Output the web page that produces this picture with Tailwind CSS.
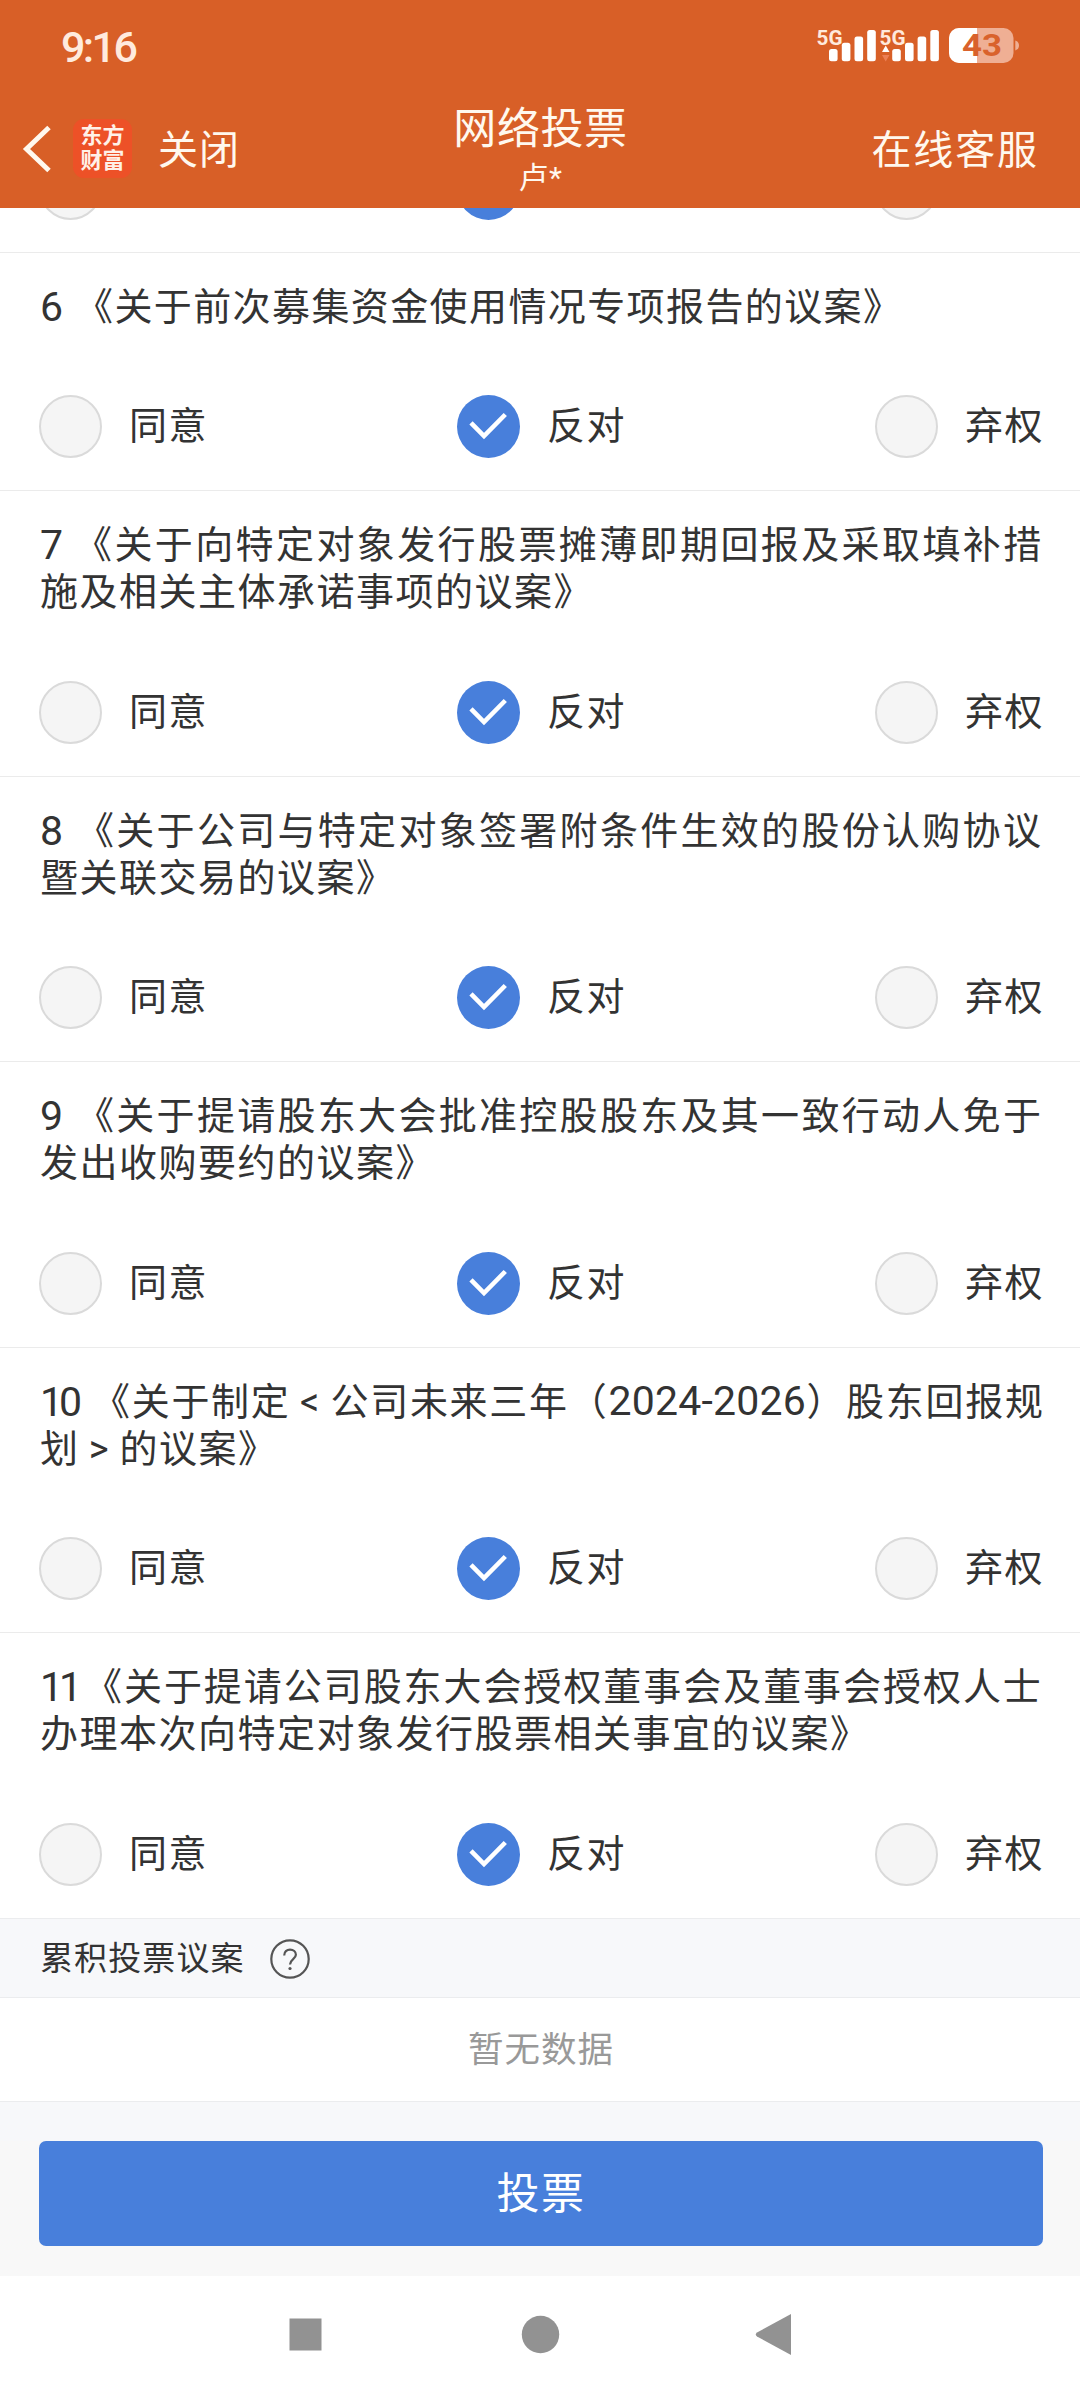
<!DOCTYPE html>
<html lang="zh-CN">
<head>
  <meta charset="UTF-8" />
  <meta name="viewport" content="width=device-width, initial-scale=1.0" />
  <title>网络投票</title>
  <script src="https://cdn.jsdelivr.net/npm/@tailwindcss/browser@4"></script>
  <style>
    body {
      font-family: Roboto, 'Noto Sans CJK SC', sans-serif;
    }
  </style>
</head>
<body class="w-[1080px] h-[2400px] flex flex-col overflow-hidden bg-white text-[#333]">

  <!-- Header -->
  <header class="h-[208px] shrink-0 bg-[#d85f27] text-[#fff8ee]">
    <!-- Status bar -->
    <div class="h-[90px] flex items-center justify-between pl-[61px] pr-[60px]">
      <span class="text-[43px] leading-[50px] font-medium tracking-[-2.6px] text-[#ffeadd] pt-[3px]">9:16</span>
      <svg class="w-[204px] h-[90px]" viewBox="816 0 204 90" fill="#fff">
        <text x="816.5" y="45" font-size="21" font-weight="700" fill="#ffe9dc" textLength="26" lengthAdjust="spacingAndGlyphs">5G</text>
        <rect x="829" y="49" width="8.6" height="12.3" rx="2.5" />
        <rect x="841.8" y="42.7" width="8.6" height="18.6" rx="2.5" />
        <rect x="854.5" y="36.6" width="8.6" height="24.7" rx="2.5" />
        <rect x="867.2" y="30" width="8.6" height="31.3" rx="2.5" />
        <text x="879.5" y="45" font-size="21" font-weight="700" fill="#ffe9dc" textLength="26" lengthAdjust="spacingAndGlyphs">5G</text>
        <path d="M885.7 45.5L889.5 52H882Z" />
        <path d="M885.7 61.5L889.5 55H882Z" fill="#ec7f55" />
        <rect x="892.2" y="49" width="8.6" height="12.3" rx="2.5" />
        <rect x="905" y="42.7" width="8.6" height="18.6" rx="2.5" />
        <rect x="917.6" y="36.6" width="8.6" height="24.7" rx="2.5" />
        <rect x="930.3" y="30" width="8.6" height="31.3" rx="2.5" />
        <!-- Battery -->
        <rect x="949" y="28" width="64.5" height="35" rx="10" fill="#efaf94" />
        <path d="M977 28H959A10 10 0 0 0 949 38V53A10 10 0 0 0 959 63H977Z" />
        <path d="M1015.3 40.5Q1019 42 1019 45.5T1015.3 50.5Z" fill="#efaf94" />
        <text x="962" y="56" font-size="31" font-weight="700" fill="#d9622c" textLength="40" lengthAdjust="spacingAndGlyphs">43</text>
      </svg>
    </div>
    <!-- Title bar -->
    <div class="h-[118px] grid grid-cols-[1fr_auto_1fr] items-start">
      <div class="flex items-center h-[118px] pl-[22px]">
        <svg class="w-[32px] h-[50px]" viewBox="0 0 32 50" fill="none" stroke="#fff8ee" stroke-width="5"><path d="M27 3.5L4.5 25L27 46.5" /></svg>
        <div class="w-[59px] h-[59px] ml-[19px] mb-[2px] rounded-[11px] bg-[#ed5127] flex flex-col items-center justify-center text-[22px] leading-[25px] font-bold text-[#fff1e8]">
          <span>东方</span><span>财富</span>
        </div>
        <span class="ml-[26px] pt-[3px] text-[40px] leading-[50px] tracking-[1px]">关闭</span>
      </div>
      <div class="flex flex-col items-center pt-[13px] pl-[1px]">
        <span class="text-[43px] leading-[52px] tracking-[0.6px]">网络投票</span>
        <span class="text-[30px] leading-[34px] tracking-[0.5px] mt-[6px]">卢*</span>
      </div>
      <div class="flex items-center justify-end h-[118px] pr-[41px]">
        <span class="pt-[3px] text-[40px] leading-[50px] tracking-[1.9px]">在线客服</span>
      </div>
    </div>
  </header>

  <!-- Proposal list, scrolled so that only the foot of item 5 shows -->
  <main class="shrink-0">
    <div class="h-[44px] overflow-hidden flex flex-col justify-end pb-[32px]" id="previous"></div>
    <div id="proposals"></div>
  </main>

  <!-- Cumulative voting -->
  <section class="shrink-0">
    <div class="h-[80px] box-border border-y border-[#ebecee] bg-[#f7f8fa] flex items-center pl-[40px]">
      <h2 class="text-[33px] leading-[48px] tracking-[1.1px] pt-[2px]">累积投票议案</h2>
      <svg class="w-[40px] h-[40px] ml-[25px] mt-[2px]" viewBox="0 0 40 40" fill="none" stroke="#555" stroke-width="2.2">
        <circle cx="20" cy="20" r="18.7" />
        <path d="M14.2 16.5C14.2 12.7 16.8 10.7 20 10.7C23.5 10.7 25.9 12.8 25.9 15.8C25.9 20 20 20.3 20 25.5" />
        <circle cx="20" cy="29.5" r="1.6" fill="#555" stroke="none" />
      </svg>
    </div>
    <p class="h-[103px] text-center text-[35.5px] leading-[103px] tracking-[1px] text-[#999] pl-[2px] pt-[1px]">暂无数据</p>
  </section>

  <!-- Submit -->
  <div class="h-[40px] shrink-0 border-t border-[#ebecee] bg-[#f7f8fa]"></div>
  <div class="h-[135px] shrink-0 bg-[#f8f8f8] pl-[39px] pr-[37px]">
    <button class="w-full h-[105px] rounded-[7px] bg-[#487fdb] text-white text-[43px] leading-[103px] tracking-[1.5px] pb-[2px] pt-[2px]">投票</button>
  </div>

  <!-- System navigation -->
  <nav class="flex-1 flex justify-center">
    <svg class="w-[502px] h-[117px]" viewBox="289 2276 502 117" fill="#929292">
      <rect x="289.5" y="2318.5" width="32" height="32" />
      <circle cx="540.5" cy="2334.5" r="18.7" />
      <path d="M791 2314V2355L757 2336.5Q754.5 2334.5 757 2332.5Z" />
    </svg>
  </nav>

  <script>
    // gap: width of the number column, track: letter spacing of the first line
    const proposals = [
      { no: '6', gap: 35, track: 1.4, lines: ['《关于前次募集资金使用情况专项报告的议案》'], height: 'h-[238px]' },
      { no: '7', gap: 34, track: 2.4, lines: ['《关于向特定对象发行股票摊薄即期回报及采取填补措', '施及相关主体承诺事项的议案》'], height: 'h-[286px]' },
      { no: '8', gap: 36, track: 2.3, lines: ['《关于公司与特定对象签署附条件生效的股份认购协议', '暨关联交易的议案》'], height: 'h-[285px]' },
      { no: '9', gap: 36, track: 2.3, lines: ['《关于提请股东大会批准控股股东及其一致行动人免于', '发出收购要约的议案》'], height: 'h-[286px]' },
      { no: '10', gap: 52, track: 1.7, lines: ['《关于制定<span class="inline-block w-[40px] text-center">&lt;</span>公司未来三年（<span class="inline-block w-[198px] text-[41px] leading-[40px] tracking-[0.2px]">2024-2026</span>）股东回报规', '划<span class="inline-block w-[40px] text-center">&gt;</span>的议案》'], height: 'h-[285px]' },
      { no: '11', gap: 44, track: 1.95, lines: ['《关于提请公司股东大会授权董事会及董事会授权人士', '办理本次向特定对象发行股票相关事宜的议案》'], height: 'h-[286px]' }
    ];

    const empty = '<span class="shrink-0 w-[63px] h-[63px] rounded-full border-2 border-[#dadada] bg-[#f5f5f5]"></span>';
    const checked = `<svg class="shrink-0 w-[63px] h-[63px]" viewBox="0 0 63 63" fill="none">
      <circle cx="31.5" cy="31.5" r="31.5" fill="#487fdb" />
      <path d="M14 27.8L27 41L48.3 19.5" stroke="#fff" stroke-width="4.6" />
    </svg>`;

    function option(mark, label) {
      return `<label class="w-[166px] h-[63px] flex items-center">${mark}${label ? `<span class="ml-[27px] pb-[2px] whitespace-nowrap text-[38px] leading-[50px] tracking-[1.4px]">${label}</span>` : ''}</label>`;
    }

    function options(labels) {
      return `<div class="flex justify-between shrink-0 px-[39px]">${option(empty, labels[0])}${option(checked, labels[1])}${option(empty, labels[2])}</div>`;
    }

    document.getElementById('previous').innerHTML = options(['', '', '']);
    document.getElementById('proposals').innerHTML = proposals.map(p => `
      <article class="${p.height} box-border border-t border-[#ebebeb] flex flex-col justify-between pt-[31px] pb-[32px]">
        <h3 class="pl-[40px] text-[38px] leading-[47px] whitespace-nowrap">
          <div class="flex h-[47px]">
            <span class="shrink-0 text-[41px] ${p.no.length > 1 ? 'tracking-[-4px]' : 'tracking-[-0.8px]'}" style="width:${p.gap}px">${p.no}</span>
            <span style="letter-spacing:${p.track}px">${p.lines[0]}</span>
          </div>
          ${p.lines[1] ? `<div class="h-[47px] tracking-[1.5px]">${p.lines[1]}</div>` : ''}
        </h3>
        ${options(['同意', '反对', '弃权'])}
      </article>`).join('');
  </script>
</body>
</html>
